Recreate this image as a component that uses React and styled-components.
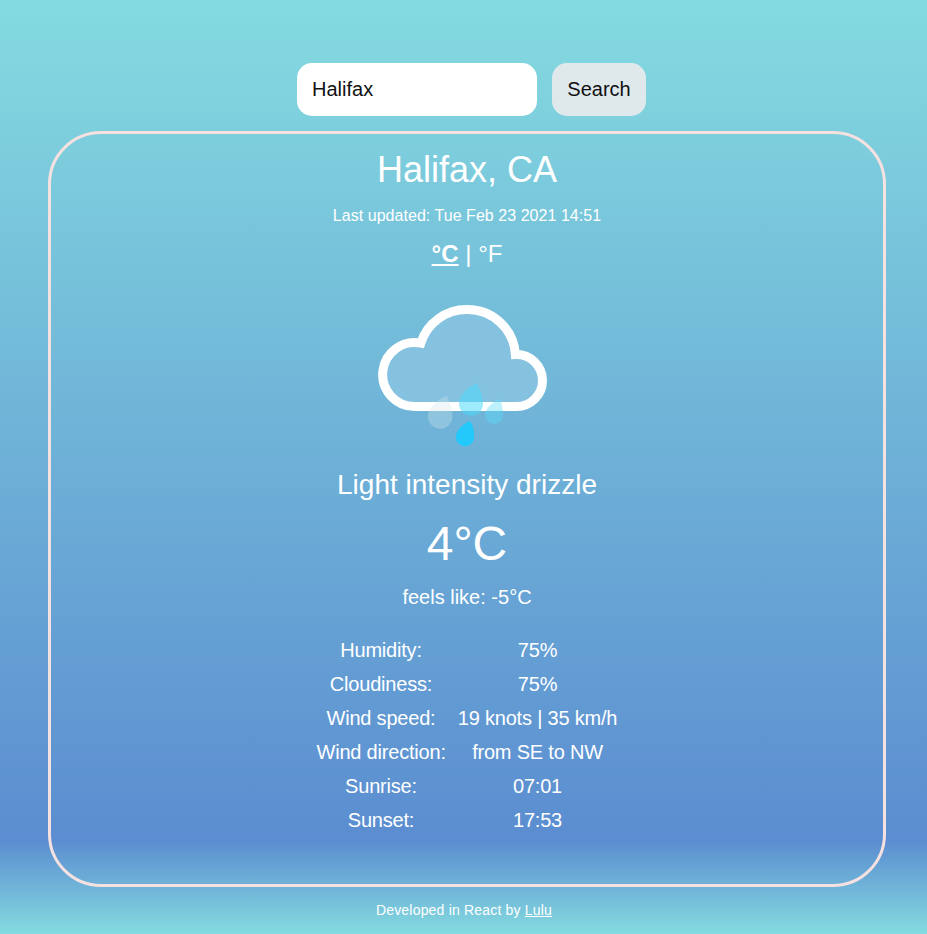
import React, { useState } from "react";
import styled, { createGlobalStyle } from "styled-components";

const GlobalStyle = createGlobalStyle`
  * { box-sizing: border-box; }
  body {
    margin: 0;
    font-family: "Liberation Sans", Arial, sans-serif;
    color: #fff;
  }
`;

const Page = styled.div`
  display: flex;
  flex-direction: column;
  align-items: center;
  width: 100%;
  min-height: 934px;
  padding: 63px 41px 0 48px;
  background: linear-gradient(180deg, #84dbe0 0%, #5b8dd0 90%, #84dbe0 100%);
`;

const SearchForm = styled.form`
  display: flex;
  gap: 15px;
  height: 53px;
  margin: 0 0 15px 9px;
`;

const SearchInput = styled.input`
  width: 240px;
  padding: 0 15px;
  border: 0;
  border-radius: 15px;
  background: #fff;
  color: #111;
  font: 20px "Liberation Sans", Arial, sans-serif;
  outline: none;
`;

const SearchButton = styled.button`
  width: 94px;
  padding: 0;
  border: 0;
  border-radius: 15px;
  background: #dfe8eb;
  color: #111;
  font: 20px "Liberation Sans", Arial, sans-serif;
`;

const Card = styled.main`
  display: flex;
  flex-direction: column;
  align-items: center;
  width: 838px;
  height: 756px;
  border: 3px solid #f6e1e1;
  border-radius: 53px;
`;

const Line = styled.div`
  height: ${(p) => p.$height}px;
  margin-top: ${(p) => p.$top}px;
  line-height: ${(p) => p.$height}px;
  font-size: ${(p) => p.$size}px;
  letter-spacing: ${(p) => p.$spacing || 0}px;
  white-space: pre;
`;

const Unit = styled.span`
  font-weight: ${(p) => (p.$active ? 700 : 400)};
  text-decoration: ${(p) => (p.$active ? "underline" : "none")};
  cursor: pointer;
`;

const WeatherIcon = styled.svg`
  display: block;
  width: 180px;
  height: 150px;
  margin-top: 32px;
`;

const Details = styled.dl`
  display: grid;
  grid-template-columns: 129px 160px;
  column-gap: 12px;
  grid-auto-rows: 34px;
  margin: 24px 0 0;
  font-size: 20px;
  line-height: 34px;
  letter-spacing: -0.2px;
  text-align: center;
  white-space: nowrap;
`;

const Cell = styled.div`
  display: contents;
`;

const Term = styled.dt``;

const Value = styled.dd`
  margin: 0;
`;

const Footer = styled.footer`
  margin: 15px 0 0 -6px;
  font-size: 14px;
  line-height: 17px;
  letter-spacing: 0.19px;
`;

const FooterLink = styled.a`
  color: inherit;
  text-decoration: underline;
`;

const details = [
  ["Humidity:", "75%"],
  ["Cloudiness:", "75%"],
  ["Wind speed:", "19 knots | 35 km/h"],
  ["Wind direction:", "from SE to NW"],
  ["Sunrise:", "07:01"],
  ["Sunset:", "17:53"],
];

function DrizzleIcon() {
  return (
    <WeatherIcon viewBox="377 300 180 150" aria-label="Drizzle">
      <path
        d="M414.5 406.5 A32 32 0 1 1 420.8 343.1 A48 48 0 0 1 467.3 309.5 A48 48 0 0 1 515.4 354.6 A26 26 0 0 1 542.5 380.5 A26 26 0 0 1 516.5 406.5 Z"
        fill="#85c2e0"
        stroke="#fff"
        strokeWidth="9"
      />
      <path d="M447 396 C439 398.5 428 408 428 416.5 A12.2 12.2 0 0 0 452.4 416.5 C452.4 409 449 401 447 396Z" fill="#d5e6ec" fillOpacity=".32" />
      <path d="M477 383.5 C469 386 459 395 459 403.7 A12 12 0 0 0 483 403.7 C483 396 480 389 477 383.5Z" fill="#4bdafc" fillOpacity=".54" />
      <path d="M500 399 C493.5 401 485 408.5 485 415 A9.1 9.1 0 0 0 503.2 415 C503.2 409 501.5 403 500 399Z" fill="#5cdcfc" fillOpacity=".4" />
      <path d="M470 421 C464 423 455.8 430.5 455.8 437 A9.2 9.2 0 0 0 474.2 437 C474.2 431 473 425 470 421Z" fill="#22c9fa" />
    </WeatherIcon>
  );
}

export default function App() {
  const [city, setCity] = useState("Halifax");
  const [unit, setUnit] = useState("C");
  return (
    <>
      <GlobalStyle />
      <Page>
        <SearchForm onSubmit={(e) => e.preventDefault()}>
          <SearchInput value={city} onChange={(e) => setCity(e.target.value)} aria-label="City" />
          <SearchButton type="submit">Search</SearchButton>
        </SearchForm>
        <Card>
          <Line $top={15} $height={42} $size={36}>Halifax, CA</Line>
          <Line $top={16} $height={18} $size={16} $spacing={0.04}>Last updated: Tue Feb 23 2021 14:51</Line>
          <Line $top={15} $height={28} $size={24}>
            <Unit $active={unit === "C"} onClick={() => setUnit("C")}>°C</Unit>
            {" | "}
            <Unit $active={unit === "F"} onClick={() => setUnit("F")}>°F</Unit>
          </Line>
          <DrizzleIcon />
          <Line $top={19} $height={32} $size={28}>Light intensity drizzle</Line>
          <Line $top={15} $height={56} $size={48}>4°C</Line>
          <Line $top={13} $height={24} $size={20}>feels like: -5°C</Line>
          <Details>
            {details.map(([label, value]) => (
              <Cell key={label}>
                <Term>{label}</Term>
                <Value>{value}</Value>
              </Cell>
            ))}
          </Details>
        </Card>
        <Footer>
          Developed in React by <FooterLink href="#">Lulu</FooterLink>
        </Footer>
      </Page>
    </>
  );
}
